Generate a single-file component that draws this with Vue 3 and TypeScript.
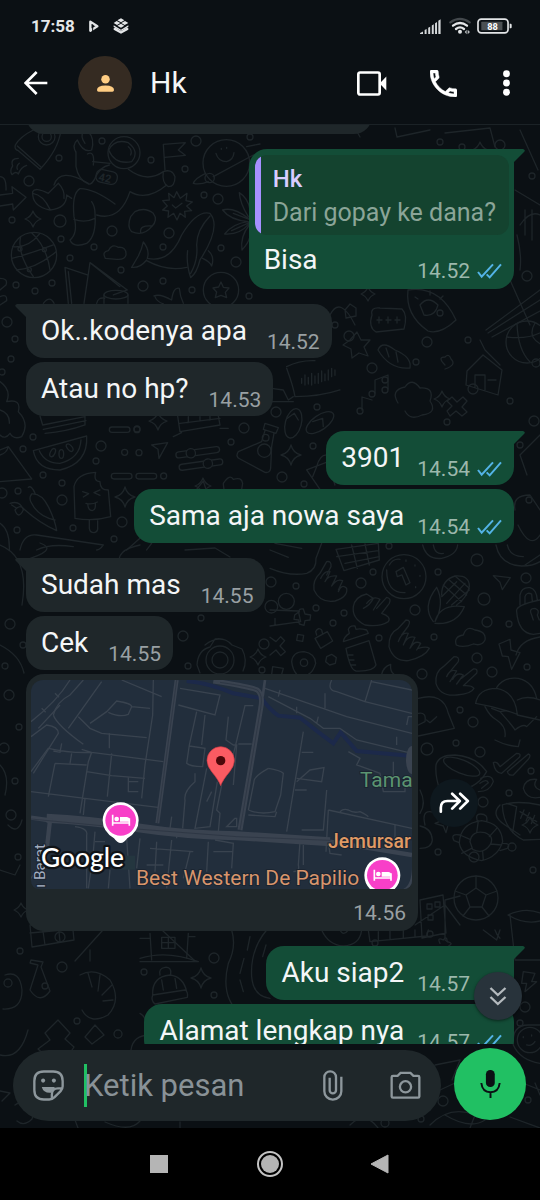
<script setup lang="ts">
import { ref } from 'vue'

interface Message {
  id: number
  text: string
  time: string
  sent: boolean
  first: boolean
  quote?: { author: string; text: string }
  map?: boolean
}

const messages: Message[] = [
  { id: 1, text: 'Bisa', time: '14.52', sent: true, first: true, quote: { author: 'Hk', text: 'Dari gopay ke dana?' } },
  { id: 2, text: 'Ok..kodenya apa', time: '14.52', sent: false, first: true },
  { id: 3, text: 'Atau no hp?', time: '14.53', sent: false, first: false },
  { id: 4, text: '3901', time: '14.54', sent: true, first: true },
  { id: 5, text: 'Sama aja nowa saya', time: '14.54', sent: true, first: false },
  { id: 6, text: 'Sudah mas', time: '14.55', sent: false, first: true },
  { id: 7, text: 'Cek', time: '14.55', sent: false, first: false },
  { id: 8, text: '', time: '14.56', sent: false, first: false, map: true },
  { id: 9, text: 'Aku siap2', time: '14.57', sent: true, first: true },
  { id: 10, text: 'Alamat lengkap nya', time: '14.57', sent: true, first: false },
]

const draft = ref('')

// Wallpaper bubbles: [centre x, centre y, radius]
const dots: [number, number, number][] = [
  [102, 16, 3], [59, 33, 3], [29, 56, 5], [151, 35, 3], [185, 44, 3], [196, 16, 5], [204, 70, 3], [218, 74, 5],
  [12, 95, 3], [60, 96, 6], [61, 114, 3], [112, 106, 5], [94, 122, 3], [169, 108, 5], [163, 122, 3], [221, 123, 3],
  [70, 133, 3], [16, 160, 3], [35, 166, 3], [52, 158, 3], [121, 145, 3], [143, 161, 5], [163, 156, 3], [192, 165, 3], [236, 137, 5], [249, 171, 3],
  [7, 197, 5], [15, 214, 3], [11, 234, 3], [2, 247, 3],
  [137, 304, 3], [244, 303, 5], [231, 317, 3], [33, 312, 3], [23, 324, 3], [101, 321, 5], [96, 336, 3],
  [43, 350, 3], [62, 358, 3], [18, 366, 3], [2, 368, 5], [62, 375, 5], [122, 397, 5], [73, 403, 3], [114, 414, 3], [17, 405, 3],
  [276, 287, 5], [317, 282, 3], [313, 321, 3], [282, 352, 5], [304, 359, 3], [335, 200, 3], [349, 211, 5], [372, 243, 5],
  [385, 255, 3], [427, 217, 5], [440, 188, 3], [416, 237, 3], [468, 215, 3], [473, 264, 5], [447, 297, 3],
  [527, 151, 5], [532, 51, 3], [536, 238, 4], [510, 276, 3], [534, 296, 5], [520, 320, 3], [529, 375, 3],
  [373, 447, 3], [361, 458, 5], [296, 461, 3], [271, 457, 5], [389, 421, 3], [438, 447, 3], [477, 435, 6], [526, 453, 5],
  [316, 483, 3], [344, 488, 3], [333, 498, 3], [415, 485, 5], [484, 474, 6], [487, 497, 5], [509, 499, 3], [379, 513, 3],
  [434, 512, 3], [477, 533, 5], [492, 547, 5], [527, 542, 3], [422, 549, 5], [460, 585, 3], [473, 597, 5],
  [23, 520, 3], [10, 499, 5], [5, 541, 3], [9, 570, 5], [19, 602, 3], [4, 623, 5], [15, 656, 3], [11, 690, 5], [18, 732, 3],
  [183, 511, 5], [201, 493, 3], [264, 519, 5], [262, 545, 3], [188, 541, 3], [218, 469, 3],
  [427, 624, 6], [480, 627, 5], [456, 618, 3], [531, 646, 3], [509, 668, 3], [483, 677, 5], [438, 727, 3], [474, 732, 5], [512, 722, 4], [533, 745, 3],
  [214, 833, 5], [214, 870, 3], [144, 847, 3], [60, 812, 5], [20, 826, 3], [62, 842, 5], [45, 861, 3], [8, 858, 4], [118, 909, 4], [77, 896, 3],
  [430, 809, 3], [375, 818, 3], [525, 882, 5], [520, 898, 3], [443, 976, 5], [528, 975, 3], [421, 994, 3], [385, 998, 4],
  [500, 20, 5], [440, 17, 3], [462, 22, 3], [250, 12, 3],
]

// Four-pointed sparkles: [centre x, centre y, radius]
const sparkles: [number, number, number][] = [
  [33, 94, 8], [158, 296, 9], [291, 330, 10], [125, 372, 10], [203, 361, 8], [368, 169, 7], [201, 853, 10],
  [480, 25, 8], [258, 532, 8], [442, 274, 8], [21, 785, 7], [530, 700, 8], [95, 936, 7],
]

function sparkle(x: number, y: number, r: number): string {
  return `M${x} ${y - r}Q${x + 2} ${y - 2} ${x + r} ${y}Q${x + 2} ${y + 2} ${x} ${y + r}Q${x - 2} ${y + 2} ${x - r} ${y}Q${x - 2} ${y - 2} ${x} ${y - r}Z`
}
</script>

<template>
  <div class="app">
    <div class="status">
      <span class="clock">17:58</span>
      <svg class="st-play" viewBox="264 58 30 34" aria-hidden="true">
        <path d="M268 62 L289 76 L268 89 Z" fill="none" stroke="#e4e6e8" stroke-width="7" stroke-linejoin="round" />
        <path d="M275 70 V90" stroke="#0b1014" stroke-width="3" />
      </svg>
      <svg class="st-layers" viewBox="334 54 48 48" aria-hidden="true">
        <g fill="#e4e6e8">
          <path d="M358 55 L368 61 L358 67 L347 61 Z M345 63 L356 69 L346 75 L336 69 Z M370 63 L380 69 L369 75 L359 69 Z M358 71 L368 77 L358 83 L347 77 Z" />
          <path d="M336 76 L358 89 L380 76 V81 L358 93 L336 81 Z" />
          <path d="M336 85 L342 83 L358 94 L374 83 L380 85 V89 L358 101 L336 89 Z" />
        </g>
      </svg>
      <span class="spacer"></span>
      <svg class="st-signal" viewBox="447 56 64 46" aria-hidden="true">
        <path d="M447 102 V99 L456 94 V102 Z M461 102 V90 L467 87 V102 Z M472 102 V83 L478 80 V102 Z M483 102 V76 L489 72 V102 Z M493 102 V69 L499 65 V102 Z M503 102 V61 L510 57 V102 Z" fill="#d5d8da" />
      </svg>
      <svg class="st-wifi" viewBox="534 54 66 54" aria-hidden="true">
        <g fill="none" stroke-linecap="round">
          <path d="M538 70 Q567 49 596 70" stroke="#43484c" stroke-width="7" />
          <path d="M546 80 Q567 64 588 80" stroke="#e4e6e8" stroke-width="7" />
          <path d="M555 90 Q567 80 579 90" stroke="#e4e6e8" stroke-width="7" />
        </g>
        <circle cx="567" cy="98" r="6" fill="#e4e6e8" />
        <path d="M581 99 L587 92 V106 Z M597 99 L590 92 V106 Z" fill="#b5b9bc" />
      </svg>
      <svg class="st-battery" viewBox="621 55 106 48" aria-label="88%">
        <rect x="624" y="58" width="91" height="42" rx="10" fill="none" stroke="#e4e6e8" stroke-width="5" />
        <rect x="634" y="66" width="64" height="26" rx="2" fill="#4b5053" />
        <path d="M720 72 h3 q3 0 3 4 v6 q0 4 -3 4 h-3 Z" fill="#e4e6e8" />
        <text x="668" y="90" text-anchor="middle" class="battery-text">88</text>
      </svg>
    </div>

    <header class="header">
      <button class="icon-btn back" type="button" aria-label="Kembali">
        <svg viewBox="0 0 72 72" aria-hidden="true">
          <path d="M70 36 H6 M38 3 L5 36 L38 69" fill="none" stroke="#fff" stroke-width="8" />
        </svg>
      </button>
      <div class="avatar">
        <svg viewBox="0 0 52 52" aria-hidden="true">
          <circle cx="26" cy="13" r="13" fill="#ffcd83" />
          <path d="M0 46 Q0 32 26 32 Q52 32 52 46 Q52 51 47 51 H5 Q0 51 0 46 Z" fill="#ffcd83" />
        </svg>
      </div>
      <h1 class="name">Hk</h1>
      <button class="icon-btn video" type="button" aria-label="Panggilan video">
        <svg viewBox="0 0 90 74" aria-hidden="true">
          <rect x="4" y="4" width="64" height="66" rx="5" fill="none" stroke="#fff" stroke-width="8" />
          <path d="M68 37 L88 16 V58 Z" fill="#fff" />
        </svg>
      </button>
      <button class="icon-btn call" type="button" aria-label="Panggilan suara">
        <svg viewBox="3 3 18 18" aria-hidden="true">
          <path fill="#fff" stroke="#fff" stroke-width="0.3" d="M6.54 5c.06.89.21 1.76.45 2.59l-1.2 1.2c-.41-1.2-.67-2.47-.76-3.79h1.51m9.86 12.02c.85.24 1.72.39 2.6.45v1.49c-1.32-.09-2.59-.35-3.8-.75l1.2-1.19M7.5 3H4c-.55 0-1 .45-1 1 0 9.39 7.61 17 17 17 .55 0 1-.45 1-1v-3.49c0-.55-.45-1-1-1-1.24 0-2.45-.2-3.57-.57-.1-.04-.21-.05-.31-.05-.26 0-.51.1-.71.29l-2.2 2.2c-2.83-1.45-5.15-3.76-6.59-6.59l2.2-2.2c.28-.28.36-.67.25-1.02C8.7 6.45 8.5 5.25 8.5 4c0-.55-.45-1-1-1z" />
        </svg>
      </button>
      <button class="icon-btn more" type="button" aria-label="Opsi lainnya">
        <svg viewBox="0 0 20 76" aria-hidden="true">
          <circle cx="10" cy="11" r="10" fill="#fff" /><circle cx="10" cy="38" r="10" fill="#fff" /><circle cx="10" cy="65" r="10" fill="#fff" />
        </svg>
      </button>
    </header>

    <div class="conversation">
      <svg class="wallpaper" viewBox="0 0 540 1003" preserveAspectRatio="xMidYMin slice" aria-hidden="true">
        <g class="fine">
          <circle v-for="(d, i) in dots" :key="'d' + i" :cx="d[0]" :cy="d[1]" :r="d[2]" />
          <path v-for="(s, i) in sparkles" :key="'s' + i" :d="sparkle(s[0], s[1], s[2])" />
        </g>

        <!-- rocket, astronaut, globe, whale, planet -->
        <g class="thick" transform="translate(0 5) scale(0.3333)">
          <path d="M100 0 Q60 20 46 45 Q42 58 55 62 L120 118 Q175 60 183 0 M52 48 L122 110" />
          <circle cx="140" cy="20" r="25" /><circle cx="140" cy="20" r="14" />
          <path d="M55 85 Q30 85 38 108 Q28 122 36 134 Q48 122 55 132 Q62 112 80 106 M58 100 Q48 108 52 118" />
          <path d="M0 195 L38 190 L36 170 L78 202 L40 240 L38 222 L0 228 M0 140 Q20 140 18 180" />
          <circle cx="372" cy="68" r="48" /><path d="M326 60 Q345 25 385 38 Q420 65 395 95 Q345 105 326 60 M385 50 Q398 60 392 75" />
          <path d="M328 105 Q300 110 285 145 Q275 165 265 162 Q235 150 228 110 V65 M280 105 Q285 60 262 72 M228 68 Q215 45 232 30 Q250 70 275 60 Q285 25 265 5 M250 0 Q240 20 255 40 M278 95 L330 100" />
          <rect x="288" y="122" width="64" height="38" rx="16" transform="rotate(12 320 141)" />
          <path d="M385 118 Q440 160 490 125 M390 185 Q440 215 500 165 M490 125 Q515 115 525 140 Q525 170 505 170 Q485 160 490 125 M390 185 Q360 275 290 255 M345 222 Q280 175 240 176 Q215 190 222 260 Q235 310 210 330 Q220 355 260 340 Q290 320 285 250 Q285 230 275 215 M222 268 Q255 280 285 265 M265 160 Q180 110 162 165 M215 205 L200 195 Q200 235 150 240 Q95 230 98 185 Q105 170 145 190 L175 160 M98 190 Q130 195 150 238 M175 160 Q195 180 192 205" />
          <path d="M495 120 L490 43 L556 38 L535 60 L556 76 L494 82" />
          <path d="M530 185 L541 205 L561 190 L558 212 L577 216 L560 228 L575 242 L554 244 L556 262 L540 250 L531 270 L521 250 L504 262 L506 243 L488 240 L502 228 L488 212 L508 210 L506 190 L522 203 Z M517 225 L527 234 L546 220" />
          <circle cx="679" cy="99" r="70" /><path d="M648 70 Q655 95 680 95 Q700 90 702 68 M664 55 v3 M680 52 v3 M617 130 Q585 145 580 160 Q600 165 625 155 M640 140 L760 75 M740 50 L780 42" /><circle cx="629" cy="144" r="14" />
          <path d="M405 245 Q435 230 460 250 Q475 270 455 290 Q430 320 395 305 Q380 290 392 260 Z M422 308 Q418 285 455 288" />
          <circle cx="102" cy="375" r="68" /><path d="M38 350 Q85 355 120 310 M36 385 Q95 370 160 345 M50 420 Q110 415 168 365 M62 320 Q50 370 100 440 M95 308 Q140 350 150 420" /><circle cx="60" cy="357" r="6" /><circle cx="133" cy="359" r="6" /><circle cx="88" cy="419" r="6" />
          <path d="M395 412 L415 378 Q425 360 430 336 Q450 360 442 385 Q510 400 545 315 Q590 240 630 250 Q665 290 600 390 Q590 430 572 443 Q558 400 563 362 M440 392 Q500 425 560 412 M395 412 Q420 415 440 390 M630 258 Q590 300 590 345 Q595 390 572 430 M608 385 Q630 395 635 408 Q645 380 625 362" />
          <path d="M316 385 Q305 365 325 362 Q335 340 355 352 Q380 350 378 375 Q375 390 350 388 Z" />
          <path d="M205 520 L195 412 L262 435 M252 520 L270 398 L382 480 L340 495 M270 398 L360 470 M205 425 L215 520" /><ellipse cx="348" cy="494" rx="36" ry="13" /><path d="M312 495 V520 M384 495 V520 M290 520 Q295 500 314 505" />
          <path d="M462 498 Q480 490 515 510 Q520 470 538 475 Q540 500 550 520 M465 500 Q470 515 490 522" />
          <circle cx="663" cy="480" r="53" /><path d="M663 456 L670 472 L687 474 L676 487 L680 503 L663 496 L646 503 L650 486 L639 474 L656 471 Z" />
          <path d="M745 265 Q700 230 668 240 Q690 270 745 275 Q700 280 674 312 Q720 315 748 280 M745 260 Q720 220 718 188 Q745 205 750 240 M748 285 Q720 320 726 360 Q745 340 750 320 M748 268 L700 250 M748 278 L695 302" />
          <path d="M0 445 Q25 445 18 465 L0 480 M0 500 Q22 490 20 512 L0 525 M130 520 Q150 495 162 520" />
        </g>
        <text x="99" y="57" class="suit" transform="rotate(12 106 52)">42</text>

        <!-- watermelon, ice lolly, chillies, sliders, flask -->
        <g class="thick" transform="translate(0 165) scale(0.3333)">
          <path d="M100 482 Q110 540 180 540 Q265 520 260 438 Z M118 482 Q135 520 180 520 Q240 505 243 450" />
          <ellipse cx="158" cy="488" rx="7" ry="13" transform="rotate(25 158 488)" /><ellipse cx="184" cy="492" rx="7" ry="13" /><ellipse cx="209" cy="473" rx="7" ry="13" transform="rotate(-40 209 473)" />
          <rect x="328" y="411" width="62" height="16" rx="8" /><circle cx="411" cy="419" r="9" /><circle cx="374" cy="487" r="9" /><circle cx="417" cy="488" r="9" />
          <path d="M455 465 L503 458 L477 505 L474 478 Z" />
          <rect x="334" y="550" width="62" height="17" rx="8" /><rect x="408" y="550" width="62" height="17" rx="8" /><circle cx="491" cy="558" r="9" />
          <g transform="rotate(-8 592 485)"><rect x="527" y="478" width="132" height="18" rx="9" /><circle cx="572" cy="487" r="14" class="solid" /></g>
          <g transform="rotate(-8 602 525)"><rect x="537" y="515" width="132" height="18" rx="9" /><circle cx="624" cy="524" r="14" class="solid" /></g>
          <path d="M795 400 L835 413 L828 430 L790 418 Z M795 422 L785 455 L715 485 Q705 500 720 507 L795 547 Q810 550 812 535 L815 470 L822 430" /><circle cx="793" cy="482" r="20" /><circle cx="797" cy="443" r="10" />
          <ellipse cx="880" cy="400" rx="24" ry="45" transform="rotate(15 880 400)" /><ellipse cx="960" cy="398" rx="22" ry="48" transform="rotate(55 960 398)" /><path d="M862 385 L883 370 L895 390 M938 395 L968 385 L970 410" />
          <path d="M225 685 L222 590 Q230 550 287 547 Q280 575 300 575 Q300 600 325 600 L332 680 Q280 695 225 685 M268 690 V715 Q270 728 282 728 Q295 725 293 712 V692 M248 605 l18 6 l-16 10 M300 600 l-18 8 l18 8 M258 640 Q275 645 292 636 M263 642 Q265 662 277 662 Q288 660 286 640" />
          <path d="M30 640 Q60 630 70 660 Q55 690 45 660 Q60 640 75 660 Q120 700 170 722 Q165 690 145 650 Q125 610 95 612 Q85 625 95 640 Q115 680 165 690 M105 610 Q95 585 85 592 M35 645 L50 655" />
          <path d="M0 360 Q30 370 28 400 M0 275 Q35 300 20 335 Q65 325 55 365 Q90 400 65 440 Q40 450 30 430 Q15 450 0 435" />
          <path d="M0 480 L25 470 L95 567 L0 575 M0 495 Q20 490 25 470 M0 700 Q30 720 28 780" />
          <path d="M120 378 L128 405 M128 405 L255 380 M130 418 L258 392 M135 430 Q200 425 255 405 V378" />
          <path d="M533 378 L540 425 L660 405 L655 378 M540 400 L660 385 M520 440 L545 428 M660 415 H685 M565 380 v18 M600 380 v12 M630 378 v12" />
          <path d="M60 780 Q70 730 110 735 L310 765 Q300 780 290 780 M110 780 Q150 760 220 770" />
          <path d="M860 230 Q900 210 945 212 M860 235 Q880 290 885 320 Q960 320 1020 300 M815 295 L850 300 L865 330 L880 320 M800 335 H880 M905 265 v15 M915 255 v30 M925 262 v20 M935 250 v35 M945 258 v22 M955 250 v30 M965 243 v32 M975 252 v20 M985 240 v30 M995 235 v25 M1005 240 v16" />
          <path d="M670 580 Q690 550 700 568 Q725 560 728 580 L725 598 M670 582 L672 598 M590 598 L610 573 L618 598" />
          <path d="M920 540 L960 598 M920 540 L985 515 L1005 585 M938 560 L950 530 Q960 490 985 495" />
          <path d="M380 780 L425 740 L455 760 L440 780" />
        </g>

        <!-- hands, clock, maize, lock, bottle -->
        <g class="thick" transform="translate(270 415) scale(0.3333)">
          <path d="M0 85 Q60 110 110 100 Q140 90 138 55 L155 10 M0 30 L55 52 M15 10 L95 25" />
          <path d="M198 28 L325 10 L328 60 L222 92 Z M200 50 L325 32 M245 15 L262 85 M285 12 L298 75 M225 70 L328 50" />
          <circle cx="402" cy="110" r="66" /><path d="M350 90 Q350 160 405 158 M358 75 Q370 55 390 58 M378 95 L400 82 L420 128 L408 135 L396 105 L382 110 Z M408 60 v4 M435 75 v3 M450 106 v3 M437 140 v3" />
          <path d="M132 150 Q128 120 150 100 L170 65 Q185 62 183 80 L170 105 M132 150 Q150 190 195 183 Q235 170 230 145 Q215 130 205 155 M152 115 Q165 90 180 95 Q175 110 165 125 M165 125 Q175 105 200 108 L185 138 M185 138 Q200 115 218 122 L205 150" />
          <path d="M250 200 Q255 170 290 162 L310 175 Q300 195 280 205 M290 190 Q310 165 330 178 L310 210 M320 205 L350 172 Q365 175 358 190 L335 220 Q365 230 355 245 Q330 262 285 255 Q245 235 250 200" />
          <path d="M357 320 Q355 280 385 265 L408 240 Q425 240 415 258 L395 285 M357 320 Q370 365 415 362 Q465 350 478 325 Q470 318 445 325 M385 305 Q395 275 415 280 L400 315 M402 310 Q415 285 435 292 L420 325 M422 322 Q435 300 452 310 L440 330" />
          <path d="M498 430 Q495 395 520 380 L552 350 Q570 350 565 365 L540 395 M498 430 Q510 470 560 465 Q605 462 612 445 Q605 435 580 437 L620 400 Q625 385 610 387 L575 415 M530 410 Q540 385 560 393 L540 425 M548 418 Q560 395 580 405 L560 432" />
          <path d="M490 245 Q455 200 500 142 Q525 190 495 245 M495 245 Q510 190 583 200 Q560 255 495 250 M515 165 Q515 120 555 108 Q600 105 598 140 Q590 175 560 195 M520 135 L575 185 M535 118 L590 165 M555 108 L598 145 M515 170 L560 125 M530 190 L585 130 M545 195 L598 150" />
          <path d="M670 107 L721 113 L697 149 L690 127 Z M559 315 Q550 290 580 285 Q590 255 615 270 Q650 275 645 300 Q635 320 610 312 Q580 325 559 315" />
          <path d="M740 215 Q735 195 810 180 M740 215 Q745 280 790 283 L810 280 M750 195 V165 Q755 140 780 143 Q800 148 802 180 M765 190 V170 Q770 155 785 162 L787 183 M790 240 L785 225 Q775 205 795 205 Q810 210 802 225 L808 240" />
          <path d="M0 210 L85 213 L92 245 L0 258 M15 235 V255 M88 215 Q85 205 100 207 L105 222 L122 225 L120 240 L105 242 L102 256 L88 252 L86 240 L72 238 L74 225 Z" /><circle cx="49" cy="184" r="24" /><circle cx="4" cy="200" r="19" />
          <path d="M0 292 L18 305 L32 290 L44 302 L30 318 L46 335 L32 347 L18 330 L0 345" />
          <path d="M135 295 L172 275 L188 303 L152 325 Z M140 285 L137 275 Q145 260 155 270 L158 282 M83 283 l18 3 l-3 18 l-18 -3 Z" />
          <path d="M220 305 L295 280 L290 270 Q270 265 258 268 L255 258 Q240 255 235 268 L238 280 Q222 290 220 305 M228 325 L297 302 L318 375 Q310 395 258 393 Q240 390 228 325 M235 345 h14 M238 360 h14 M243 375 h14" />
          <path d="M65 365 Q68 335 102 335 Q135 340 137 370 Q130 395 115 403 M65 365 Q68 390 80 403" /><circle cx="102" cy="368" r="11" /><path d="M170 350 l15 -7 l14 10 l-3 17 l-17 5 l-12 -10 Z M335 403 Q340 380 362 373 Q360 395 372 403 M5 403 L8 380 L40 385 L35 403" />
          <path d="M687 312 L720 298 L723 330 L750 338 L725 388 L715 350 L697 348 Z" />
          <path d="M617 490 Q625 445 680 445 Q735 455 742 523 Q680 500 617 490 M680 443 Q700 410 745 415 Q790 425 800 475 M742 480 Q770 465 810 480 M645 500 Q660 530 680 540 Q710 560 705 590 M665 505 L690 515 L710 512 M742 525 L810 540 M690 515 Q730 560 735 570 Q760 550 770 560 L800 530" />
          <path d="M445 475 Q520 455 535 520 L553 565 L445 588 M445 520 Q470 515 465 545 L445 555 M470 540 L480 548 L500 530" />
          <path d="M458 15 Q470 60 515 55 Q560 45 563 15 M490 15 Q495 45 520 40 M678 15 Q690 75 755 78 Q790 78 810 65 M712 15 Q720 50 760 50" />
        </g>

        <!-- cup, ticks, turtle, ball -->
        <g class="thick" transform="translate(420 615) scale(0.3333)">
          <path d="M48 75 Q55 45 105 45 Q170 50 200 95 Q160 165 60 150 Q45 110 48 75 M182 115 Q215 100 220 125 Q210 155 175 155 M180 130 Q200 115 205 128 L185 145" /><ellipse cx="125" cy="80" rx="58" ry="20" transform="rotate(22 125 80)" />
          <path d="M220 68 Q230 62 240 80 L290 40 Q305 40 298 52 L245 100 Q225 100 220 68 M262 95 L325 42 Q335 45 325 58 L280 105 Q265 108 262 95 M225 0 Q260 18 295 20 L300 0" />
          <path d="M350 118 Q315 115 310 145 Q320 180 360 172 M350 118 Q335 140 360 150" />
          <path d="M247 195 Q290 180 360 195 M247 195 Q250 270 310 300 L360 298 M260 190 L290 200 L278 278 M300 215 L350 245 M312 210 l-10 25 M328 218 l-10 25 M344 226 l-10 25" />
          <path d="M118 310 Q120 250 185 242 Q245 250 248 305 Q235 350 185 362 Q125 350 118 310 M150 305 Q155 270 195 278 Q225 290 210 315 Q190 345 158 328 Z M175 243 L170 278 M230 265 L208 290 M245 315 L212 312 M190 360 L188 335 M125 340 L155 325 M120 285 L150 298 M172 242 Q165 222 182 222 Q205 222 200 245 M120 285 Q90 280 102 302 L118 308 M248 310 Q275 310 262 325 L240 332" />
          <path d="M0 258 Q35 265 37 300 Q35 325 0 325 M45 250 L90 232 L78 278 L70 258 Z M0 150 Q20 190 0 220" />
        </g>

        <!-- house, road, hat, spaceman -->
        <g class="thick" transform="translate(140 805) scale(0.3333)">
          <path d="M30 10 L35 90 M140 85 L145 10 M0 85 Q80 60 175 95 L0 95 M65 22 H105 V55 H65 Z M65 38 H105 M85 22 V55 M0 25 H30 M145 20 H165" />
          <path d="M275 0 Q290 50 265 100 Q240 200 300 250 M380 0 Q330 60 335 140 Q340 200 390 205 M330 20 L322 60 M312 85 L300 130 M300 150 L310 185 M378 45 L368 80" />
          <path d="M38 195 Q35 140 90 135 Q130 140 140 185 M38 195 L135 180 Q145 185 142 202 L45 222 Q32 212 38 195 M60 135 Q55 115 75 112 Q95 110 92 132 M65 150 L70 180 M105 145 L110 175" />
          <path d="M545 0 Q565 45 610 48 Q660 45 665 0 M600 0 Q610 20 625 0 M685 0 L690 35 L860 18 L865 0 M715 5 v25 M750 3 v25 M790 0 v22 M825 0 v18 M1030 0 L1070 30 L1080 0 M1065 0 Q1070 15 1080 25 M1150 125 L1185 130 L1175 155 L1190 155 L1155 185 L1160 160 L1145 160 Z M900 40 q-10 -20 10 -10 q10 -15 12 5 q20 5 5 12" />
          <path d="M1120 345 Q1115 285 1165 285 L1200 285 M1120 345 Q1140 390 1200 400" /><circle cx="1170" cy="330" r="38" /><path d="M1150 320 v3 M1175 315 v3 M1160 345 Q1175 350 1185 335" />
          <path d="M0 250 Q20 260 22 300" />
        </g>

        <!-- lower strip behind the composer -->
        <g class="fine">
          <path d="M0 930 Q20 935 28 905 M38 935 L45 930 L38 924 L50 915 L45 908 L58 895 L70 908 L65 914 L74 922 L70 928 L78 934 M85 912 L95 900 L104 910 L92 919 Z M131 925 Q133 910 150 910" />
          <path d="M0 966 L10 968 L2 976 M15 980 q8 -6 12 4 q10 -2 5 10 q-8 8 -15 2 M75 995 L78 1003 M105 997 Q130 1008 140 996 M180 997 V1003 M350 1000 Q365 985 378 1003 M430 1000 Q450 980 475 990 L470 1003 M445 990 Q470 1005 485 995" />
          <path d="M505 990 L515 955 L540 965 M510 992 L540 1003 M535 958 L540 970 M435 940 L460 935 L452 955 M440 965 L455 958" />
          <path d="M5 850 Q20 845 22 865 Q22 885 3 884 M30 865 L38 840 L30 838 L31 835 L43 837 L41 842 L50 866 Q40 880 30 865 M80 850 Q95 842 110 855 Q122 875 108 890 Q90 900 82 885 M88 848 L92 862 M100 850 L98 866 M112 860 L102 870 M113 875 L103 876" />
          <path d="M30 800 L72 795 L74 815 L32 822 Z M30 808 L74 804 M42 799 L45 820 M58 797 L60 817 M75 836 L130 775 L195 836 M90 825 V836" />
        </g>

        <!-- building, football, shells, pencils, basketball -->
        <g class="fine">
          <path d="M415 800 L445 780 L460 800 M460 771 L445 775 V815 L448 817 M420 775 L443 770 L446 808 L422 813 Z M427 779 h5 v5 h-5 Z M435 777 h5 v5 h-5 Z M428 790 h5 v5 h-5 Z" />
          <circle cx="476" cy="773" r="22" /><path d="M476 763 L486 770 L482 782 L470 782 L466 770 Z M476 763 V751 M486 770 L497 766 M482 782 L489 791 M470 782 L463 791 M466 770 L455 766" />
          <path d="M510 790 L515 835 H540 M508 790 Q525 782 540 788 M508 790 Q525 800 540 796" />
          <path d="M516 530 Q520 515 540 512 M500 680 Q490 690 505 700 L520 710" />
          <path d="M483 230 L467 246 L466 260 L498 270 L502 245 L483 230 M475 262 V250 H485 V265 M488 255 h8 M480 215 L485 225 L500 240" />
          <path d="M372 190 Q370 182 380 183 L402 184 Q408 190 404 204 L376 207 Q368 202 372 190 M377 195 l5 0 M379 192 l0 6 M386 195 l5 0 M388 192 l0 6 M395 195 l5 0 M397 192 l0 6" />
          <path d="M408 165 Q440 160 456 195 Q440 210 428 206 Q405 190 408 165 M420 180 Q428 170 438 180 Q435 192 424 190 Z M430 170 v-4 M440 174 l3 -3 M418 174 l-3 -2" />
          <path d="M486 205 L540 165 M488 208 L540 175 M492 212 L540 186 M480 160 L510 155 L530 200" />
          <circle cx="527" cy="217" r="21" /><path d="M507 212 Q530 215 545 205 M517 199 Q518 225 530 237 M535 198 Q525 215 548 222" />
          <path d="M350 215 l7 -8 l4 8 l9 0 l-6 7 l4 9 l-9 -3 l-7 5 l-1 -9 l-8 -4 Z M378 225 Q382 215 395 225 Q412 232 410 243 Q390 245 378 225 M386 223 l3 9 M396 227 l2 10" />
          <path d="M375 268 V255 L388 250 V264 M362 285 V272 L372 275" /><circle cx="372" cy="269" r="3" /><circle cx="385" cy="265" r="3" /><circle cx="360" cy="286" r="3" />
          <path d="M398 278 Q390 265 405 262 Q412 252 420 263 Q435 262 430 276 Q438 288 422 290 Q410 296 405 286 M445 240 q-8 -8 0 -8 q4 -4 6 2 q6 6 -6 10" />
          <path d="M452 272 l5 5 l6 -5 l4 4 l-5 6 l5 5 l-5 4 l-6 -5 l-6 5 l-3 -5 l5 -5 l-5 -5 Z M355 200 Q340 170 330 190 M345 185 l5 -6 l6 4 v8 l-10 2 Z" />
          <path d="M520 330 L540 310 M520 330 L527 350 M515 65 L540 80 M520 100 Q530 85 540 90 M517 110 Q522 130 520 145 M525 85 L525 110 M532 85 L532 115" />
          <path d="M445 8 L490 3 L495 22 M355 3 L360 12 M395 3 L397 12 L430 5 M520 5 L538 45" />
          <path d="M515 385 Q512 370 530 370 L540 385 M518 400 Q530 425 540 410 M525 440 L540 430" />
          <path d="M205 520 Q215 512 225 515 M197 540 Q198 525 210 522 L215 514 Q225 512 232 520 L242 524 Q248 535 243 546 M200 548 L197 540" /><circle cx="220" cy="535" r="14" /><circle cx="220" cy="535" r="8" />
          <path d="M120 440 Q115 425 140 420 M185 425 L215 423 L230 432" />
          <path d="M0 640 Q10 650 5 670 M8 700 Q18 710 22 695 M0 745 L15 750 L20 740 M425 700 Q420 680 440 690" />
          <path d="M0 420 Q30 432 22 480 M22 436 Q60 425 40 418 M0 520 Q20 530 24 548" />
        </g>
      </svg>

      <main class="messages">
        <div class="row cut"><div class="bubble received cut-bubble"></div></div>
        <div v-for="m in messages" :key="m.id" class="row" :class="{ mine: m.sent, first: m.first }">
          <div class="bubble" :class="[m.sent ? 'sent' : 'received', { quoted: m.quote, place: m.map }]">
            <svg v-if="m.first" class="tail" viewBox="0 0 12 14" aria-hidden="true">
              <path v-if="m.sent" d="M0 0 H10 Q13 1 11 3 L1 13 L0 14 Z" fill="#134d37" />
              <path v-else d="M12 0 H2 Q-1 1 1 3 L11 13 L12 14 Z" fill="#1f272a" />
            </svg>
            <blockquote v-if="m.quote" class="quote">
              <strong>{{ m.quote.author }}</strong>
              <span>{{ m.quote.text }}</span>
            </blockquote>
            <a v-if="m.map" class="map" href="#" aria-label="Lokasi">
              <svg viewBox="33 45 1143 627" preserveAspectRatio="xMidYMid slice">
                <rect x="33" y="45" width="1143" height="627" fill="#222e3c" />
                <path d="M500 48 Q570 55 640 85 L725 100 Q750 135 775 152 L840 158 L900 205 L940 235 L962 202 L1010 258 L1170 272" fill="none" stroke="#1c294a" stroke-width="12" />
                <g fill="none" stroke="#39434f" stroke-width="4">
                  <path d="M33 170 Q110 110 150 45 M100 150 Q110 110 150 90 L190 45 M100 150 Q110 180 190 238 M33 215 L80 180 Q115 185 115 205 L40 325 M145 190 L245 50 M175 155 L210 190 L245 205 L380 218 M210 175 L260 140 L290 108 Q335 115 335 125 L325 148 Q300 158 265 142 M335 125 L390 130 M400 45 L398 150 L375 300 L365 400 M305 45 L425 95" />
                  <path d="M33 320 L85 250 Q150 265 215 262 L430 290 M185 253 L215 262 L205 290 L180 445 M268 205 V250 M105 295 L85 395 M105 295 L200 300 M200 320 L275 332 L375 340 M275 265 L262 395 M325 335 V380 H355 M33 380 L195 400 L420 428 M100 258 L120 262 L125 235 M150 295 L155 265 M325 350 H355 M195 400 L190 450" />
                  <path d="M475 120 L585 150 L600 90 L480 70 M530 140 L508 240 L500 295 Q510 305 548 305 L555 250 L508 243 M555 150 L545 240 M625 155 L618 225 L640 240 L650 240 L640 360 M700 122 H675 L635 290 M655 237 H695 M560 310 L525 490 L570 485 L592 350 M525 325 V350 Q490 380 495 405 L488 490 M605 360 L590 435 L600 445 L595 500 M645 460 L620 485 H650 V460 Z M575 380 L560 410" />
                  <path d="M735 70 L980 155 L1176 205 M745 95 L870 160 L910 190 L960 190 L1010 225 L1176 265 M780 75 L775 95 M830 125 V145 M895 155 L890 175 M915 85 V130 M935 45 Q920 75 950 80 L1035 110 L1055 45 M1035 110 L1176 145 M1055 50 L1176 75 M1160 180 L1165 155 H1176 M1130 215 V240 M985 260 L1020 280 L1010 300 L1080 325 L1090 380 H1155 V350 M1120 290 V350" />
                  <path d="M745 310 Q780 315 790 325 L782 390 L765 440 Q720 450 685 435 M745 310 Q700 335 702 350 L685 435 M850 200 L800 500 M845 262 H880 M830 350 L870 315 L912 308 L905 350 L830 340 M825 375 H860 M920 375 L910 495 H845 M685 450 L765 455 L770 440 M925 435 L1176 490 M925 435 L918 560 M960 440 Q970 430 985 435 Q1000 445 1020 440 Q1040 450 1045 455 M1125 480 V540" />
                  <path d="M33 640 L60 600 M165 485 Q205 490 200 510 V670 M225 500 L220 560 H260 M225 530 H255 M320 520 L330 670 M360 520 L350 610 M390 550 L520 560 M410 530 L405 620 M455 525 L440 670 M510 560 L490 640 M565 530 L560 620 M585 525 L640 535 L635 610 M640 560 H580 M840 530 L835 600 Q840 620 820 620 M850 540 V600 M925 530 L930 565 L965 570 M380 600 H430 M215 600 L205 670 M270 615 L265 670 M470 520 V500 M450 490 L455 455" />
                  <path d="M55 190 L120 120 M65 130 l12 12 M105 85 l12 12" />
                </g>
                <g fill="none" stroke="#3a4350">
                  <path d="M470 45 L412 475" stroke-width="12" />
                  <path d="M580 48 Q690 65 712 75 Q730 90 722 130 L660 495" stroke-width="15" />
                  <path d="M735 45 L728 95" stroke-width="8" />
                  <path d="M80 460 Q200 465 350 488 T650 512 L930 530" stroke-width="27" />
                  <path d="M33 458 L90 466 L75 600 M930 530 L1176 570" stroke-width="13" />
                </g>
                <g fill="none" stroke="#28323f" stroke-width="2">
                  <path d="M33 462 L350 492 L650 515 L930 526" />
                  <path d="M470 45 L412 475 M600 52 Q690 65 712 75 Q730 90 722 130 L660 495" />
                </g>
                <ellipse cx="1176" cy="285" rx="18" ry="42" fill="#3a4350" />
                <path d="M1150 672 Q1176 660 1176 600 V672 Z" fill="#3a4350" />
                <rect x="290" y="572" width="55" height="42" fill="#24363f" />
                <text class="m-label street" x="0" y="0" transform="translate(76 668) rotate(-90)">ı Barat</text>
                <text class="m-label park" x="1020" y="365">Tama</text>
                <text class="m-label area" x="924" y="549">Jemursar</text>
                <text class="m-label poi" x="348" y="661">Best Western De Papilio</text>
                <path d="M602 362 Q596 345 575 320 Q561 303 561 286 A41 41 0 0 1 643 286 Q643 303 629 320 Q608 345 602 362 Z" fill="#fb5b62" stroke="#d23c46" stroke-width="2" />
                <circle cx="602" cy="287" r="14" fill="#4d0709" />
                <g id="hotel">
                  <path d="M302 534 Q292 534 282 520 Q248 500 248 466 A54 54 0 0 1 356 466 Q356 500 322 520 Q312 534 302 534 Z" fill="#fff" />
                  <circle cx="302" cy="466" r="46" fill="#f83fc8" />
                  <path d="M278 449 V482 M278 474 H328 M328 482 V460" stroke="#fff" stroke-width="5" fill="none" />
                  <path d="M300 456 H320 Q328 456 328 464 V470 H300 Z" fill="#fff" /><circle cx="290" cy="462" r="7" fill="#fff" />
                </g>
                <use href="#hotel" transform="translate(785 165)" />
                <text class="google" x="63" y="606">Google</text>
              </svg>
            </a>
            <div class="line">
              <span v-if="m.text" class="text">{{ m.text }}</span>
              <span class="meta">
                <time>{{ m.time }}</time>
                <svg v-if="m.sent" class="ticks" viewBox="709 366 75 48" aria-label="Dibaca">
                  <path d="M712 393 L723 407 L757 370 M738 400 L747 409 L781 370" fill="none" stroke="#53b3e6" stroke-width="6" />
                </svg>
              </span>
            </div>
          </div>
          <button v-if="m.map" class="forward" type="button" aria-label="Teruskan">
            <svg viewBox="58 156 92 63" aria-hidden="true">
              <path d="M63 215 V203 Q63 183 83 183 H118 M97 161 L120 183 L97 206 M121 161 L144 183 L121 206" fill="none" stroke="#fff" stroke-width="8" stroke-linecap="round" stroke-linejoin="round" />
            </svg>
          </button>
        </div>
        <button class="jump" type="button" aria-label="Ke pesan terbaru">
          <svg viewBox="1048 174 53 60" aria-hidden="true">
            <path d="M1052 180 L1074 201 L1097 180 M1052 207 L1074 228 L1097 207" fill="none" stroke="#b4babe" stroke-width="7" />
          </svg>
        </button>
      </main>

      <form class="composer" @submit.prevent>
        <div class="field">
          <button class="icon-btn emoji" type="button" aria-label="Stiker">
            <svg viewBox="98 120 92 91" aria-hidden="true">
              <path d="M130 124 H158 Q186 124 186 152 V168 Q186 176 180 182 L162 200 Q155 207 146 207 H130 Q102 207 102 179 V152 Q102 124 130 124 Z M185 174 H172 Q154 174 154 192 V206" fill="none" stroke="#8d979c" stroke-width="7" />
              <path d="M124 170 H162 V176 Q155 178 152 187 Q129 189 124 170 Z" fill="#8d979c" />
              <circle cx="128" cy="151" r="6" fill="#8d979c" /><circle cx="160" cy="151" r="6" fill="#8d979c" />
            </svg>
          </button>
          <span class="caret"></span>
          <input v-model="draft" class="input" type="text" placeholder="Ketik pesan" aria-label="Ketik pesan" />
          <button class="icon-btn clip" type="button" aria-label="Lampirkan">
            <svg viewBox="161 120 60 92" aria-hidden="true">
              <path d="M216 140 V183 A25 25 0 0 1 165 183 V141 A17 17 0 0 1 200 141 V180 A9 9 0 0 1 181 180 V143" fill="none" stroke="#8d979c" stroke-width="7" />
            </svg>
          </button>
          <button class="icon-btn camera" type="button" aria-label="Kamera">
            <svg viewBox="361 124 94 86" aria-hidden="true">
              <path d="M370 138 H384 L393 129 H423 L432 138 H446 Q450 138 450 142 V200 Q450 204 446 204 H370 Q366 204 366 200 V142 Q366 138 370 138 Z" fill="none" stroke="#8d979c" stroke-width="7" />
              <circle cx="408" cy="171" r="17" fill="none" stroke="#8d979c" stroke-width="7" />
            </svg>
          </button>
        </div>
        <button class="mic" type="button" aria-label="Pesan suara">
          <svg viewBox="628 114 64 90" aria-hidden="true">
            <rect x="646" y="116" width="27" height="52" rx="13" fill="#0b1014" />
            <path d="M632 156 Q635 184 660 184 Q685 184 688 156 M660 184 V202" fill="none" stroke="#0b1014" stroke-width="6" />
          </svg>
        </button>
      </form>
    </div>

    <nav class="sysnav">
      <button type="button" aria-label="Aplikasi terbaru"><svg viewBox="0 0 28 28"><rect x="4" y="5" width="18" height="18" fill="#b5b5b5" /></svg></button>
      <button type="button" aria-label="Beranda"><svg viewBox="0 0 28 28"><circle cx="14" cy="14" r="12" fill="none" stroke="#c4c4c4" stroke-width="2" /><circle cx="14" cy="14" r="9" fill="#b5b5b5" /></svg></button>
      <button type="button" aria-label="Kembali"><svg viewBox="0 0 28 28"><path d="M5 14 L22 5 V23 Z" fill="#b5b5b5" stroke="#b5b5b5" stroke-linejoin="round" /></svg></button>
    </nav>
  </div>
</template>

<style>
html,
body {
  background: #0b1014;
}
</style>

<style scoped>
.app {
  display: flex;
  flex-direction: column;
  height: 100vh;
  overflow: hidden;
  background: #0b1014;
  color: #f4f6f7;
  font-family: Roboto, "Liberation Sans", sans-serif;
}
button {
  border: 0;
  padding: 0;
  background: none;
  cursor: pointer;
}
svg {
  display: block;
}
.status {
  display: flex;
  align-items: center;
  height: 44px;
  padding: 8px 28px 0 31px;
  box-sizing: border-box;
  flex: none;
}
.clock {
  font-size: 17px;
  font-weight: 700;
  line-height: 20px;
  color: #e4e6e8;
}
.st-play {
  width: 10px;
  height: 12px;
  margin-left: 14px;
}
.st-layers {
  width: 16px;
  height: 16px;
  margin-left: 14px;
}
.spacer {
  flex: 1;
}
.st-signal {
  width: 21px;
  height: 15px;
  margin-right: 8px;
}
.st-wifi {
  width: 22px;
  height: 18px;
  margin-right: 6px;
}
.st-battery {
  width: 35px;
  height: 16px;
}
.battery-text {
  font: 700 28px Roboto, sans-serif;
  fill: #fff;
}
.header {
  display: flex;
  align-items: center;
  height: 81px;
  padding: 0 30px 2px 24px;
  box-sizing: border-box;
  border-bottom: 1px solid #1b2226;
  flex: none;
}
.icon-btn svg {
  width: 100%;
  height: 100%;
}
.back {
  width: 24px;
  height: 24px;
}
.avatar {
  display: grid;
  place-items: center;
  width: 54px;
  height: 54px;
  margin-left: 30px;
  border-radius: 50%;
  background: #352b22;
}
.avatar svg {
  width: 17px;
  height: 17px;
}
.name {
  flex: 1;
  margin: 0 0 0 18px;
  font-size: 30px;
  font-weight: 400;
  line-height: 36px;
}
.video {
  width: 30px;
  height: 25px;
}
.call {
  width: 27px;
  height: 27px;
  margin-left: 43px;
}
.more {
  width: 7px;
  height: 26px;
  margin-left: 46px;
}
.more svg {
  overflow: visible;
}
.conversation {
  position: relative;
  display: flex;
  flex-direction: column;
  flex: 1;
  min-height: 0;
}
.wallpaper {
  position: absolute;
  inset: 0;
  width: 100%;
  height: 100%;
}
.fine,
.thick {
  fill: none;
  stroke: #1e2529;
  stroke-linecap: round;
  stroke-linejoin: round;
}
.fine {
  stroke-width: 1.3;
}
.thick {
  stroke-width: 4;
}
.solid {
  fill: #0b1014;
}
.suit {
  font: 700 11px Roboto, sans-serif;
  fill: #1e2529;
}
.messages {
  position: relative;
  flex: 1;
  min-height: 0;
  padding: 0 26px;
  overflow: hidden;
}
.row {
  display: flex;
  align-items: center;
  gap: 12px;
  margin-top: 4px;
}
.row.first {
  margin-top: 15px;
}
.row.mine {
  justify-content: flex-end;
}
.row.cut {
  align-items: flex-end;
  height: 9px;
  margin-top: 0;
}
.bubble {
  position: relative;
  box-sizing: border-box;
  padding: 0 12px 0 15px;
  border-radius: 18px;
}
.received {
  background: #1f272a;
}
.sent {
  background: #134d37;
}
.cut-bubble {
  flex: none;
  width: 71%;
  height: 54px;
}
.first .received {
  border-top-left-radius: 0;
}
.first .sent {
  border-top-right-radius: 0;
}
.tail {
  position: absolute;
  top: 0;
  width: 12px;
  height: 14px;
}
.sent .tail {
  left: 100%;
  margin-left: -1px;
}
.received .tail {
  right: 100%;
  margin-right: -1px;
}
.line {
  display: flex;
  justify-content: space-between;
  align-items: flex-end;
  gap: 20px;
  height: 54px;
}
.sent .line {
  gap: 13px;
}
.text {
  font-size: 28px;
  line-height: 34px;
  padding-bottom: 10px;
  white-space: nowrap;
}
.meta {
  display: flex;
  align-items: center;
  gap: 7px;
  padding-bottom: 3px;
  font-size: 21px;
  line-height: 26px;
  color: #99a0a3;
}
.sent .meta {
  color: #9cb8ac;
}
.ticks {
  width: 25px;
  height: 16px;
}
.quoted {
  padding: 6px 5px 2px 6px;
}
.quoted .line {
  height: 52px;
  padding: 0 7px 0 9px;
}
.quote {
  position: relative;
  display: flex;
  flex-direction: column;
  box-sizing: border-box;
  height: 80px;
  margin: 0;
  padding: 7px 13px 0 18px;
  border-radius: 12px;
  background: #14432f;
  overflow: hidden;
  line-height: 34px;
  font-size: 25px;
  white-space: nowrap;
}
.quote::before {
  content: "";
  position: absolute;
  inset: 0 auto 0 0;
  width: 6px;
  background: #a690ff;
}
.quote strong {
  font-size: 24px;
  font-weight: 500;
  color: #d8ccff;
}
.quote span {
  color: #8ba598;
}
.place {
  width: 392px;
  max-width: 84%;
  padding: 6px 6px 0 5px;
}
.place .line {
  justify-content: flex-end;
  height: 42px;
  padding-right: 6px;
}
.place .meta {
  padding-bottom: 5px;
}
.map {
  display: block;
  border-radius: 12px 12px 8px 8px;
  overflow: hidden;
}
.map svg {
  width: 100%;
  height: auto;
}
.m-label {
  font-family: Roboto, sans-serif;
  stroke: #1b2430;
  stroke-width: 6px;
  paint-order: stroke;
}
.poi {
  font-size: 63px;
  fill: #d8956c;
}
.area {
  font-size: 58px;
  font-weight: 500;
  fill: #e09a64;
}
.park {
  font-size: 63px;
  fill: #5b9471;
}
.street {
  font-size: 46px;
  fill: #a3aec0;
}
.google {
  font: 500 79px Lato, Roboto, sans-serif;
  fill: #fff;
  stroke: #101418;
  stroke-width: 14px;
  stroke-linejoin: round;
  paint-order: stroke;
}
.forward {
  display: grid;
  place-items: center;
  flex: none;
  width: 48px;
  height: 48px;
  border-radius: 50%;
  background: #0e181e;
}
.forward svg {
  width: 31px;
  height: 21px;
}
.jump {
  position: absolute;
  right: 18px;
  bottom: 24px;
  display: grid;
  place-items: center;
  width: 48px;
  height: 48px;
  border-radius: 50%;
  background: #28333b;
  box-shadow: 0 1px 3px rgba(0, 0, 0, 0.5);
}
.jump svg {
  width: 18px;
  height: 20px;
}
.composer {
  position: relative;
  display: flex;
  align-items: center;
  gap: 13px;
  height: 84px;
  padding: 3px 14px 7px 13px;
  box-sizing: border-box;
  flex: none;
}
.field {
  display: flex;
  align-items: center;
  flex: 1;
  min-width: 0;
  height: 71px;
  margin-top: 3px;
  padding: 0 20px;
  box-sizing: border-box;
  border-radius: 36px;
  background: #1f272a;
}
.emoji {
  width: 31px;
  height: 31px;
}
.caret {
  width: 3px;
  height: 43px;
  margin: 0 -3px 0 20px;
  background: #21c063;
}
.input {
  flex: 1;
  min-width: 0;
  padding: 0;
  border: 0;
  outline: 0;
  background: none;
  color: #f4f6f7;
  font-family: inherit;
  font-size: 31px;
  line-height: 40px;
}
.input::placeholder {
  color: #899297;
  opacity: 1;
}
.clip {
  width: 20px;
  height: 31px;
}
.camera {
  width: 31px;
  height: 29px;
  margin-left: 47px;
}
.mic {
  display: grid;
  place-items: center;
  width: 72px;
  height: 72px;
  border-radius: 50%;
  background: #21c063;
}
.mic svg {
  width: 21px;
  height: 30px;
}
.sysnav {
  display: flex;
  justify-content: center;
  height: 72px;
  background: #000;
  flex: none;
}
.sysnav button {
  display: grid;
  place-items: center;
  width: 110px;
}
.sysnav svg {
  width: 28px;
  height: 28px;
}
</style>
